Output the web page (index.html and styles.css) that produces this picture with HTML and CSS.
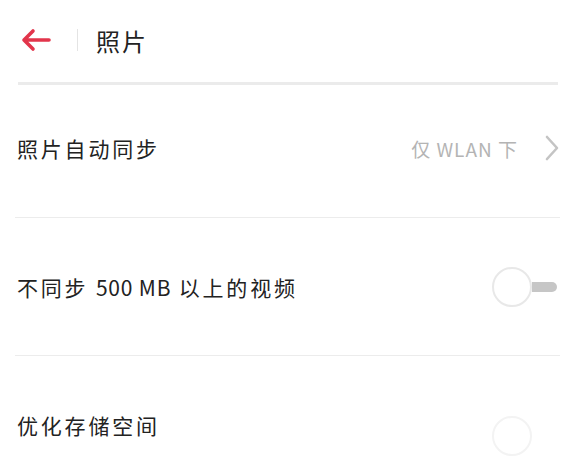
FILE: index.html
```html
<!DOCTYPE html>
<html lang="zh-CN">
<head>
    <meta charset="UTF-8">
    <meta name="viewport" content="width=device-width, initial-scale=1.0">
    <title>照片</title>
    <link rel="stylesheet" href="styles.css">
</head>
<body>

    <!-- Header -->
    <div class="header">
        <svg class="back" width="32" height="24" viewBox="0 0 32 24">
            <path d="M29 12 H4 M13 3 L4 12 L13 21" fill="none" stroke="#e2354b" stroke-width="3.6" stroke-linecap="round" stroke-linejoin="round"/>
        </svg>
        <span class="sep"></span>
        <h1>照片</h1>
    </div>
    <div class="rule"></div>

    <!-- Settings list -->
    <div class="list">
        <div class="row row-first">
            <span class="label">照片自动同步</span>
            <span class="value">仅 WLAN 下</span>
            <svg class="chevron" width="16" height="28" viewBox="0 0 16 28">
                <path d="M3 3 L13 14 L3 25" fill="none" stroke="#c4c4c4" stroke-width="2.6" stroke-linecap="round" stroke-linejoin="round"/>
            </svg>
        </div>
        <div class="row">
            <span class="label">不同步 <span class="latin">500 MB</span> 以上的视频</span>
            <div class="toggle">
                <span class="knob"></span>
                <span class="track"></span>
            </div>
        </div>
        <div class="row row-last">
            <span class="label">优化存储空间</span>
            <div class="toggle faint">
                <span class="knob"></span>
            </div>
        </div>
    </div>

</body>
</html>
```

FILE: styles.css
```css
/* styles.css */

body {
    font-family: "Noto Sans CJK SC", "Noto Sans", sans-serif;
    background-color: #fff;
    color: #222;
    margin: 0;
    padding: 0;
    overflow: hidden;
}

/* Header */
.header {
    height: 82px;
    display: flex;
    align-items: center;
    padding-left: 20px;
    box-sizing: border-box;
    padding-bottom: 2px;
}

.back {
    display: block;
}

.sep {
    width: 1px;
    height: 22px;
    background-color: #e4e4e4;
    margin-left: 25px;
}

.header h1 {
    margin: 0 0 0 18px;
    font-size: 24px;
    font-weight: 400;
    letter-spacing: 2px;
    color: #222;
}

.rule {
    height: 3px;
    background-color: #ebebeb;
    margin: 0 26px 0 18px;
}

/* Rows */
.list {
    margin: 0 24px 0 15px;
}

.row {
    display: flex;
    align-items: center;
    height: 137px;
    border-bottom: 1px solid #ececec;
    padding-left: 2px;
}

.row-first {
    height: 133px;
    padding-bottom: 6px;
    box-sizing: border-box;
}

.row-last {
    border-bottom: none;
    height: 100px;
    align-items: flex-start;
    padding-top: 54px;
    box-sizing: border-box;
}

.label {
    flex: 1;
    font-size: 21px;
    letter-spacing: 2.8px;
    color: #222;
}

.latin {
    font-size: 21px;
    letter-spacing: 0.8px;
}

.value {
    font-size: 19px;
    color: #b4b4b4;
    letter-spacing: 1px;
    margin-right: 26px;
}

.chevron {
    display: block;
    margin-right: 0;
}

/* Switch */
.toggle {
    display: flex;
    align-items: center;
    margin-right: 3px;
}

.knob {
    width: 36px;
    height: 36px;
    border: 2px solid #e8e8e8;
    border-radius: 50%;
    background: #fff;
}

.track {
    width: 25px;
    height: 10px;
    background-color: #c6c6c6;
    border-radius: 0 5px 5px 0;
}

.faint {
    margin-right: 28px;
    margin-top: 6px;
}

.faint .knob {
    border-color: #f3f3f3;
}
```
